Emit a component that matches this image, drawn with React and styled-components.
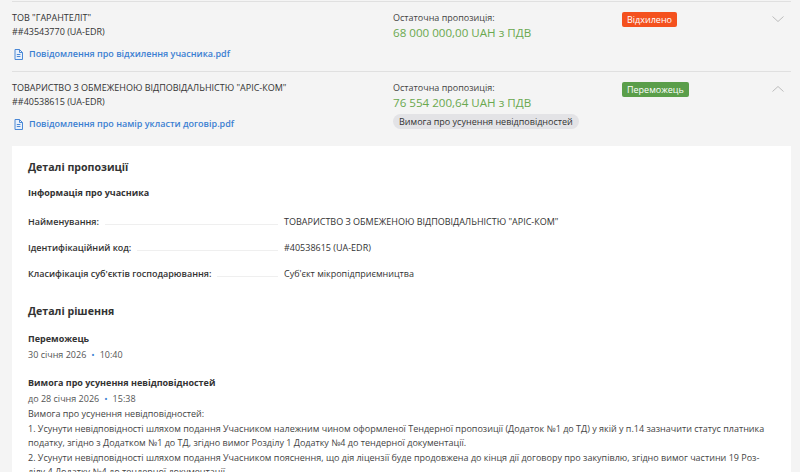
import React from "react";
import styled, { createGlobalStyle } from "styled-components";

const Global = createGlobalStyle`
  html, body { margin: 0; padding: 0; background: #f4f4f4; }
  body { font-family: "Open Sans", "Noto Sans", sans-serif; color: #333; -webkit-font-smoothing: antialiased; }
  * { box-sizing: border-box; }
`;

const Page = styled.div`
  padding: 1px 9px 0 12px;
  width: 800px;
  height: 472px;
  overflow: hidden;
`;

const Row = styled.div`
  border-top: 1px solid #e0e0e0;
  display: grid;
  grid-template-columns: 381px 229px 1fr 20px;
  padding: 9px 0 ${(p) => p.$pb}px;
`;

const Col = styled.div`
  display: flex;
  flex-direction: column;
  align-items: flex-start;
`;

const Name = styled.div`
  font-size: 9px;
  line-height: 14px;
  color: #333;
`;

const DocLink = styled.a`
  display: flex;
  align-items: center;
  gap: 6px;
  margin-top: ${(p) => p.$mt}px;
  margin-left: 2px;
  font-size: 9px;
  line-height: 14px;
  font-weight: 600;
  color: #3b7fd2;
  text-decoration: none;
`;

const Label = styled.div`
  font-size: 9px;
  line-height: 14px;
  color: #444;
`;

const Amount = styled.div`
  font-size: 11.6px;
  line-height: 16px;
  color: #6aa84f;
`;

const Tag = styled.span`
  margin-top: 3px;
  background: #e3e3e6;
  border-radius: 8px;
  padding: 0 6px;
  font-size: 9px;
  line-height: 15px;
  color: #333;
`;

const Badge = styled.span`
  align-self: flex-start;
  margin-top: 1px;
  background: ${(p) => p.$bg};
  color: #fff;
  font-size: 9px;
  line-height: 15px;
  padding: 0 5px;
  border-radius: 2px;
`;

const Chevron = styled.svg`
  width: 14px;
  height: 14px;
  margin-top: 1px;
`;

const Card = styled.div`
  background: #fff;
  padding: 13px 16px 0;
  height: 400px;
`;

const H2 = styled.div`
  font-size: 10.6px;
  line-height: 16px;
  font-weight: 700;
  color: #333;
  margin-top: ${(p) => p.$mt || 0}px;
`;

const H3 = styled.div`
  font-size: 9px;
  line-height: 16px;
  font-weight: 700;
  color: #333;
  margin-top: ${(p) => p.$mt || 0}px;
`;

const InfoList = styled.div`
  margin-top: 8px;
`;

const InfoRow = styled.div`
  display: grid;
  grid-template-columns: 256px 1fr;
  height: 26px;
  align-items: center;
  font-size: 9px;
  line-height: 14px;
`;

const InfoLabel = styled.div`
  display: flex;
  align-items: center;
  font-weight: 600;
  color: #333;
`;

const Leader = styled.span`
  flex: 1;
  height: 1px;
  margin: 5px 6px 0;
  background: #efefef;
`;

const InfoValue = styled.div`
  color: #333;
`;

const DateLine = styled.div`
  font-size: 9px;
  line-height: 16px;
  color: #555;
`;

const Dot = styled.span`
  color: #3b7fd2;
  margin: 0 5px;
`;

const Para = styled.div`
  font-size: 9px;
  line-height: 14.5px;
  color: #444;
  width: 740px;
  hyphens: manual;
`;

const FileIcon = () => (
  <svg width="9" height="11" viewBox="0 0 9 11">
    <path d="M1 0.5h4.5L8.5 3.5V10.5H1z" fill="#e8f0fb" stroke="#4a88d6" strokeWidth="1" />
    <path d="M5.5 0.5V3.5H8.5" fill="none" stroke="#4a88d6" strokeWidth="1" />
    <path d="M2.8 5.5h3.6M2.8 7.5h3.6" stroke="#4a88d6" strokeWidth="1" />
  </svg>
);

const Chev = ({ up }) => (
  <Chevron viewBox="0 0 14 14">
    <path d={up ? "M1.5 9.5L7 4.5l5.5 5" : "M1.5 4.5L7 9.5l5.5-5"} fill="none" stroke="#bdbdbd" strokeWidth="1" />
  </Chevron>
);

export default function App() {
  return (
    <>
      <Global />
      <Page>
        <Row $pb={10}>
          <Col>
            <Name>ТОВ "ГАРАНТЕЛІТ"</Name>
            <Name>##43543770 (UA-EDR)</Name>
            <DocLink $mt={8}>
              <FileIcon />
              Повідомлення про відхилення учасника.pdf
            </DocLink>
          </Col>
          <Col>
            <Label>Остаточна пропозиція:</Label>
            <Amount>68 000 000,00 UAH з ПДВ</Amount>
          </Col>
          <Col>
            <Badge $bg="#f4511e">Відхилено</Badge>
          </Col>
          <Col>
            <Chev />
          </Col>
        </Row>
        <Row $pb={15}>
          <Col>
            <Name>ТОВАРИСТВО З ОБМЕЖЕНОЮ ВІДПОВІДАЛЬНІСТЮ "АРІС-КОМ"</Name>
            <Name>##40538615 (UA-EDR)</Name>
            <DocLink $mt={8}>
              <FileIcon />
              Повідомлення про намір укласти договір.pdf
            </DocLink>
          </Col>
          <Col>
            <Label>Остаточна пропозиція:</Label>
            <Amount>76 554 200,64 UAH з ПДВ</Amount>
            <Tag>Вимога про усунення невідповідностей</Tag>
          </Col>
          <Col>
            <Badge $bg="#5a9e4a">Переможець</Badge>
          </Col>
          <Col>
            <Chev up />
          </Col>
        </Row>
        <Card>
          <H2>Деталі пропозиції</H2>
          <H3 $mt={10}>Інформація про учасника</H3>
          <InfoList>
            <InfoRow>
              <InfoLabel>Найменування:<Leader /></InfoLabel>
              <InfoValue>ТОВАРИСТВО З ОБМЕЖЕНОЮ ВІДПОВІДАЛЬНІСТЮ "АРІС-КОМ"</InfoValue>
            </InfoRow>
            <InfoRow>
              <InfoLabel>Ідентифікаційний код:<Leader /></InfoLabel>
              <InfoValue>#40538615 (UA-EDR)</InfoValue>
            </InfoRow>
            <InfoRow>
              <InfoLabel>Класифікація суб'єктів господарювання:<Leader /></InfoLabel>
              <InfoValue>Суб'єкт мікропідприємництва</InfoValue>
            </InfoRow>
          </InfoList>
          <H2 $mt={16}>Деталі рішення</H2>
          <H3 $mt={12}>Переможець</H3>
          <DateLine>30 січня 2026<Dot>•</Dot>10:40</DateLine>
          <H3 $mt={12}>Вимога про усунення невідповідностей</H3>
          <DateLine>до 28 січня 2026<Dot>•</Dot>15:38</DateLine>
          <Para>
            Вимога про усунення невідповідностей:
            <br />
            1. Усунути невідповідності шляхом подання Учасником належним чином оформленої Тендерної пропозиції (Додаток №1 до ТД) у якій у п.14 зазначити статус платника податку, згідно з Додатком №1 до ТД, згідно вимог Розділу 1 Додатку №4 до тендерної документації.
            <br />
            2. Усунути невідповідності шляхом подання Учасником пояснення, що дія ліцензії буде продовжена до кінця дії договору про закупівлю, згідно вимог частини 19 Роз{"\u00AD"}ділу 4 Додатку №4 до тендерної документації.
          </Para>
        </Card>
      </Page>
    </>
  );
}
